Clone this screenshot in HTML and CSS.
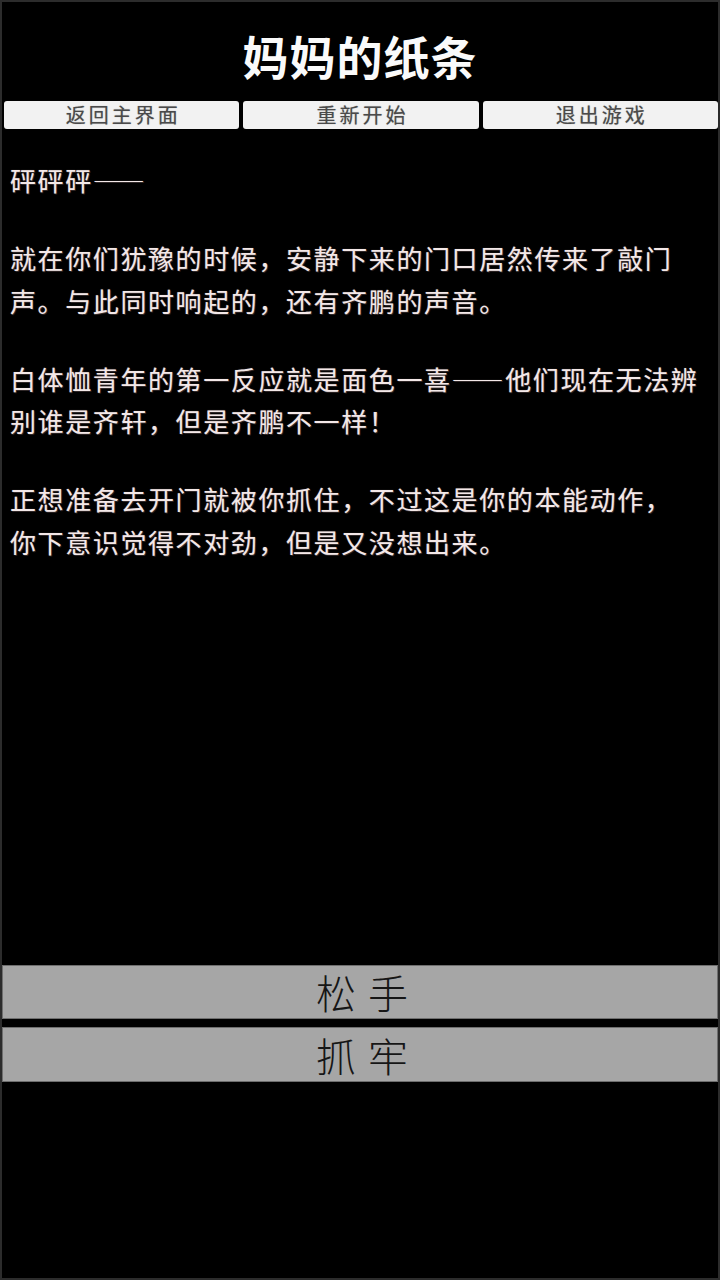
FILE: index.html
```html
<!DOCTYPE html>
<html lang="zh-CN">
<head>
<meta charset="utf-8">
<title>妈妈的纸条</title>
<link rel="stylesheet" href="styles.css">
</head>
<body>
<div class="screen">
  <h1 class="title">妈妈的纸条</h1>
  <nav class="menu">
    <button class="menu-btn">返回主界面</button>
    <button class="menu-btn">重新开始</button>
    <button class="menu-btn">退出游戏</button>
  </nav>
  <div class="story">
    <p>砰砰砰——</p>
    <p>就在你们犹豫的时候，安静下来的门口居然传来了敲门<br>声。与此同时响起的，还有齐鹏的声音。</p>
    <p>白体恤青年的第一反应就是面色一喜——他们现在无法辨<br>别谁是齐轩，但是齐鹏不一样！</p>
    <p>正想准备去开门就被你抓住，不过这是你的本能动作，<br>你下意识觉得不对劲，但是又没想出来。</p>
  </div>
  <div class="choices">
    <button class="choice">松手</button>
    <button class="choice">抓牢</button>
  </div>
</div>
</body>
</html>
```
FILE: styles.css
```css
html, body {
  margin: 0;
  padding: 0;
  background: #000;
}
.screen {
  width: 720px;
  height: 1280px;
  box-sizing: border-box;
  border: 2px solid #2c2c2c;
  background: #000;
  display: flex;
  flex-direction: column;
  font-family: "Noto Sans CJK SC", "Noto Sans", sans-serif;
}
.title {
  margin: 30px 0 23px;
  height: 46px;
  font-size: 46px;
  line-height: 46px;
  font-weight: 700;
  color: #fafafa;
  text-align: center;
  letter-spacing: 1px;
}
.menu {
  display: grid;
  grid-template-columns: 1fr 1fr 1fr;
  gap: 4px;
  padding: 0 0 0 2px;
}
.menu-btn {
  height: 28px;
  margin: 0;
  padding: 0 0 0 3px;
  border: none;
  border-radius: 3px;
  background: #f2f2f2;
  color: #4a4a4a;
  font-family: inherit;
  font-size: 20px;
  letter-spacing: 3px;
  line-height: 28px;
  text-shadow: 0 0 1px #999;
}
.story {
  flex: 1;
  margin-top: 30px;
  padding: 0 8px;
  color: #f3e8e8;
  font-size: 26px;
  letter-spacing: 1.6px;
  line-height: 42.5px;
  text-shadow: 0 0 1px #6a5a5a, 1px 1px 0 #2a2222;
}
.story p {
  margin: 0 0 35.5px;
  white-space: nowrap;
}
.choices {
  display: flex;
  flex-direction: column;
  gap: 8px;
  margin-bottom: 196px;
}
.choice {
  height: 54px;
  margin: 0;
  padding: 0 0 0 16px;
  border: 1px solid #6e6e6e;
  background: #a6a6a6;
  color: #161616;
  font-family: inherit;
  font-size: 40px;
  font-weight: 300;
  letter-spacing: 12px;
  line-height: 52px;
}
.choice + .choice {
  height: 55px;
}
```
